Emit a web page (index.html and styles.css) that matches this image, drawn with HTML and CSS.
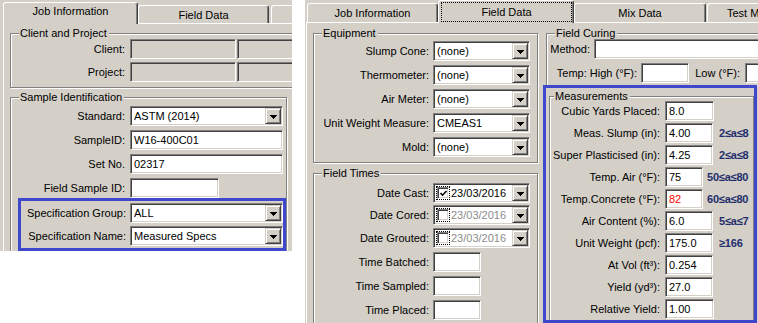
FILE: index.html
```html
<!DOCTYPE html>
<html>
<head>
<meta charset="utf-8">
<link rel="stylesheet" href="styles.css">
</head>
<body>
<div class="screen">
  <section class="win win-left">
    <div class="tabs tabs-left">
      <div class="tab tab-act tl-job">Job Information</div>
      <div class="tab tab-in tl-field">Field Data</div>
      <div class="tab tab-in tl-more"></div>
    </div>
    <div class="page page-left">
      <div class="group g-client">
        <div class="gtitle">Client and Project</div>
        <div class="row r-client">
          <span class="lbl lbl-l">Client:</span>
          <div class="fld dis w106"></div>
          <div class="fld dis wide sep"></div>
        </div>
        <div class="row r-project">
          <span class="lbl lbl-l">Project:</span>
          <div class="fld dis w106"></div>
          <div class="fld dis wide sep"></div>
        </div>
      </div>
      <div class="group g-sample">
        <div class="gtitle">Sample Identification</div>
        <div class="row r-std">
          <span class="lbl lbl-l">Standard:</span>
          <div class="fld combo w153"><span class="txt">ASTM (2014)</span><span class="dd"><svg width="7" height="4" viewBox="0 0 7 4" shape-rendering="crispEdges"><path d="M0 0h7v1h-1v1h-1v1h-1v1h-1v-1h-1v-1h-1v-1h-1z"/></svg></span></div>
        </div>
        <div class="row r-g4">
          <span class="lbl lbl-l">SampleID:</span>
          <div class="fld w153">W16-400C01</div>
        </div>
        <div class="row r-g4">
          <span class="lbl lbl-l">Set No.</span>
          <div class="fld w153">02317</div>
        </div>
        <div class="row r-g4">
          <span class="lbl lbl-l">Field Sample ID:</span>
          <div class="fld w89"></div>
        </div>
        <div class="hl hl-spec">
          <div class="row">
            <span class="lbl lbl-hl">Specification Group:</span>
            <div class="fld combo w153"><span class="txt">ALL</span><span class="dd"><svg width="7" height="4" viewBox="0 0 7 4" shape-rendering="crispEdges"><path d="M0 0h7v1h-1v1h-1v1h-1v1h-1v-1h-1v-1h-1v-1h-1z"/></svg></span></div>
          </div>
          <div class="row r-g3">
            <span class="lbl lbl-hl">Specification Name:</span>
            <div class="fld combo w153"><span class="txt">Measured Specs</span><span class="dd"><svg width="7" height="4" viewBox="0 0 7 4" shape-rendering="crispEdges"><path d="M0 0h7v1h-1v1h-1v1h-1v1h-1v-1h-1v-1h-1v-1h-1z"/></svg></span></div>
          </div>
        </div>
      </div>
    </div>
  </section>

  <section class="win win-right">
    <div class="tabs tabs-right">
      <div class="tab tab-in2 tr-job">Job Information</div>
      <div class="tab tab-act2 tr-field"><span class="focus">Field Data</span></div>
      <div class="tab tab-in2 tr-mix">Mix Data</div>
      <div class="tab tab-in2 tr-test">Test M</div>
    </div>
    <div class="page page-right">
      <div class="cols">
        <div class="col-l">
          <div class="group g-equip">
            <div class="gtitle">Equipment</div>
            <div class="row r-e1">
              <span class="lbl lbl-r">Slump Cone:</span>
              <div class="fld combo w97"><span class="txt">(none)</span><span class="dd"><svg width="7" height="4" viewBox="0 0 7 4" shape-rendering="crispEdges"><path d="M0 0h7v1h-1v1h-1v1h-1v1h-1v-1h-1v-1h-1v-1h-1z"/></svg></span></div>
            </div>
            <div class="row r-g4">
              <span class="lbl lbl-r">Thermometer:</span>
              <div class="fld combo w97"><span class="txt">(none)</span><span class="dd"><svg width="7" height="4" viewBox="0 0 7 4" shape-rendering="crispEdges"><path d="M0 0h7v1h-1v1h-1v1h-1v1h-1v-1h-1v-1h-1v-1h-1z"/></svg></span></div>
            </div>
            <div class="row r-g4">
              <span class="lbl lbl-r">Air Meter:</span>
              <div class="fld combo w97"><span class="txt">(none)</span><span class="dd"><svg width="7" height="4" viewBox="0 0 7 4" shape-rendering="crispEdges"><path d="M0 0h7v1h-1v1h-1v1h-1v1h-1v-1h-1v-1h-1v-1h-1z"/></svg></span></div>
            </div>
            <div class="row r-g4">
              <span class="lbl lbl-r">Unit Weight Measure:</span>
              <div class="fld combo w97"><span class="txt">CMEAS1</span><span class="dd"><svg width="7" height="4" viewBox="0 0 7 4" shape-rendering="crispEdges"><path d="M0 0h7v1h-1v1h-1v1h-1v1h-1v-1h-1v-1h-1v-1h-1z"/></svg></span></div>
            </div>
            <div class="row r-g4">
              <span class="lbl lbl-r">Mold:</span>
              <div class="fld combo w97"><span class="txt">(none)</span><span class="dd"><svg width="7" height="4" viewBox="0 0 7 4" shape-rendering="crispEdges"><path d="M0 0h7v1h-1v1h-1v1h-1v1h-1v-1h-1v-1h-1v-1h-1z"/></svg></span></div>
            </div>
          </div>
          <div class="group g-times">
            <div class="gtitle">Field Times</div>
            <div class="row r-t1">
              <span class="lbl lbl-r">Date Cast:</span>
              <div class="fld combo date w97"><span class="focus-cb"><span class="cb"><svg width="9" height="9" viewBox="0 0 9 9"><polyline points="1.5,4 3.5,6.2 7.5,2" fill="none" stroke="#000" stroke-width="1.6"/></svg></span></span><span class="txt">23/03/2016</span><span class="dd"><svg width="7" height="4" viewBox="0 0 7 4" shape-rendering="crispEdges"><path d="M0 0h7v1h-1v1h-1v1h-1v1h-1v-1h-1v-1h-1v-1h-1z"/></svg></span></div>
            </div>
            <div class="row r-g2">
              <span class="lbl lbl-r">Date Cored:</span>
              <div class="fld combo date w97"><span class="focus-cb"><span class="cb"></span></span><span class="txt off">23/03/2016</span><span class="dd"><svg width="7" height="4" viewBox="0 0 7 4" shape-rendering="crispEdges"><path d="M0 0h7v1h-1v1h-1v1h-1v1h-1v-1h-1v-1h-1v-1h-1z"/></svg></span></div>
            </div>
            <div class="row r-g3">
              <span class="lbl lbl-r">Date Grouted:</span>
              <div class="fld combo date w97"><span class="focus-cb"><span class="cb"></span></span><span class="txt off">23/03/2016</span><span class="dd"><svg width="7" height="4" viewBox="0 0 7 4" shape-rendering="crispEdges"><path d="M0 0h7v1h-1v1h-1v1h-1v1h-1v-1h-1v-1h-1v-1h-1z"/></svg></span></div>
            </div>
            <div class="row r-g4">
              <span class="lbl lbl-r">Time Batched:</span>
              <div class="fld w48"></div>
            </div>
            <div class="row r-g4">
              <span class="lbl lbl-r">Time Sampled:</span>
              <div class="fld w48"></div>
            </div>
            <div class="row r-g4">
              <span class="lbl lbl-r">Time Placed:</span>
              <div class="fld w48"></div>
            </div>
          </div>
        </div>

        <div class="col-r">
          <div class="group g-curing">
            <div class="gtitle">Field Curing</div>
            <div class="row r-m1">
              <span class="lbl lbl-method">Method:</span>
              <div class="fld wide"></div>
            </div>
            <div class="row r-g4">
              <span class="lbl lbl-temp">Temp: High (°F):</span>
              <div class="fld w48"></div>
              <span class="lbl lbl-low">Low (°F):</span>
              <div class="fld w48"></div>
            </div>
          </div>
          <div class="hl hl-meas">
            <div class="group g-meas">
              <div class="gtitle gt-meas">Measurements</div>
              <div class="row r-q1">
                <span class="lbl lbl-m">Cubic Yards Placed:</span>
                <div class="fld w49">8.0</div>
              </div>
              <div class="row r-g2">
                <span class="lbl lbl-m">Meas. Slump (in):</span>
                <div class="fld w48">4.00</div>
                <span class="spec">2≤a≤8</span>
              </div>
              <div class="row r-g2">
                <span class="lbl lbl-m">Super Plasticised (in):</span>
                <div class="fld w48">4.25</div>
                <span class="spec">2≤a≤8</span>
              </div>
              <div class="row r-g2">
                <span class="lbl lbl-m">Temp. Air (°F):</span>
                <div class="fld w38">75</div>
                <span class="spec sp-n">50≤a≤80</span>
              </div>
              <div class="row r-g2">
                <span class="lbl lbl-m">Temp.Concrete (°F):</span>
                <div class="fld w38 red">82</div>
                <span class="spec sp-n">60≤a≤80</span>
              </div>
              <div class="row r-g2">
                <span class="lbl lbl-m">Air Content (%):</span>
                <div class="fld w48">6.0</div>
                <span class="spec">5≤a≤7</span>
              </div>
              <div class="row r-g2">
                <span class="lbl lbl-m">Unit Weight (pcf):</span>
                <div class="fld w48">175.0</div>
                <span class="spec">≥166</span>
              </div>
              <div class="row r-g2">
                <span class="lbl lbl-m">At Vol (ft³):</span>
                <div class="fld w48">0.254</div>
              </div>
              <div class="row r-g2">
                <span class="lbl lbl-m">Yield (yd³):</span>
                <div class="fld w48">27.0</div>
              </div>
              <div class="row r-g2">
                <span class="lbl lbl-m">Relative Yield:</span>
                <div class="fld w49">1.00</div>
              </div>
            </div>
          </div>
        </div>
      </div>
    </div>
  </section>
</div>
</body>
</html>
```

FILE: styles.css
```css
* { box-sizing: border-box; }

body {
  margin: 0;
  background: #fff;
  font-family: "Liberation Sans", Arial, sans-serif;
  font-size: 11px;
  color: #000;
}

.screen {
  display: flex;
  align-items: flex-start;
  gap: 13px;
}

.win {
  flex: none;
  background: #d4d0c8;
  overflow: hidden;
}
.win-left { width: 292px; height: 251px; }
.win-right { width: 453px; height: 323px; }

/* ---------- tabs ---------- */
.tabs {
  display: flex;
  align-items: flex-end;
}
.tabs-left { height: 23px; padding-left: 3px; }
.tabs-right { height: 22px; padding-left: 2px; }

.tab {
  flex: none;
  background: #d4d0c8;
  border-top: 1px solid #fff;
  border-left: 1px solid #fff;
  border-right: 1px solid #404040;
  box-shadow: inset -1px 0 0 #808080;
  border-radius: 3px 3px 0 0;
  text-align: center;
  line-height: 13px;
  white-space: nowrap;
  overflow: hidden;
}
.tab-act {
  height: 22px;
  margin-bottom: -1px;
  padding-top: 2px;
  position: relative;
  z-index: 1;
}
.tab-in { height: 18px; padding-top: 3px; }
.tab-in2 { height: 19px; padding-top: 3px; }
.tab-act2 {
  height: 23px;
  margin-bottom: -1px;
  padding: 1px 1px 0 2px;
  position: relative;
  z-index: 1;
}
.tab-act2 .focus {
  display: block;
  height: 20px;
  border: 1px dotted #000;
  padding-top: 3px;
}

.tl-job { width: 135px; }
.tl-field { width: 131px; }
.tl-more { width: 132px; margin-left: 2px; }
.tr-job { width: 131px; }
.tr-field { width: 136px; }
.tr-mix { width: 132px; }
.tr-test { width: 132px; margin-left: 1px; text-align: left; padding-left: 19px; }

/* ---------- tab page ---------- */
.page {
  border-top: 1px solid #fff;
  border-left: 1px solid #fff;
  height: 400px;
}
.page-left { margin-left: 3px; }
.page-right { margin-left: 1px; }

/* ---------- group boxes ---------- */
.group {
  flex: none;
  border: 1px solid #808080;
  box-shadow: inset 1px 1px 0 #fff, 1px 1px 0 #fff;
}
.gtitle {
  width: max-content;
  height: 13px;
  line-height: 13px;
  margin: -7px 0 -6px 8px;
  padding: 0 2px 0 1px;
  background: #d4d0c8;
}

.g-client { margin: 9px 0 0 6px; width: 420px; height: 55px; }
.g-sample { margin: 9px 0 0 6px; width: 277px; height: 200px; }

.cols { display: flex; align-items: flex-start; }
.col-l { flex: none; width: 225px; margin-left: 6px; }
.col-r { flex: none; width: 300px; margin-left: 5px; }

.g-equip { margin-top: 10px; height: 130px; }
.g-times { margin-top: 10px; height: 200px; }
.g-curing {
  margin: 10px 0 0 3px;
  width: 280px;
  height: 52px;
  border-bottom: 0;
}

/* ---------- highlight frames ---------- */
.hl { border: 3px solid #3f47cc; }
.hl-spec {
  margin-left: 7px;
  width: 268px;
  padding: 2px 0 2px;
}
.hl-meas {
  width: 214px;
  height: 238px;
  overflow: hidden;
}
.g-meas {
  margin: 8px 0 0 3px;
  width: 205px;
  height: 240px;
}
.gt-meas { margin-left: 4px; }

/* ---------- rows ---------- */
.row {
  display: flex;
  align-items: center;
  height: 20px;
}
.r-client { margin-top: 5px; }
.r-project { margin-top: 3px; }
.r-std { margin-top: 8px; }
.r-g2 { margin-top: 2px; }
.r-g3 { margin-top: 3px; }
.r-g4 { margin-top: 4px; }
.r-e1 { margin-top: 7px; }
.r-t1 { margin-top: 9px; }
.r-m1 { margin-top: 5px; }
.r-q1 { margin-top: 4px; }

.lbl {
  flex: none;
  text-align: right;
  white-space: nowrap;
  margin-right: 4px;
}
.lbl-l { width: 114px; margin-right: 5px; }
.lbl-hl { width: 105px; margin-right: 4px; }
.lbl-r { width: 115px; }
.lbl-method { width: 43px; }
.lbl-temp { width: 90px; }
.lbl-low { width: 46px; margin-left: 5px; margin-right: 5px; }
.lbl-m { width: 110px; margin-right: 5px; }

/* ---------- fields ---------- */
.fld {
  flex: none;
  height: 20px;
  background: #fff;
  border: 1px solid;
  border-color: #808080 #fff #fff #808080;
  box-shadow: inset 1px 1px 0 #404040, inset -1px -1px 0 #d4d0c8;
  padding: 0 2px 0 3px;
  line-height: 18px;
  white-space: nowrap;
  overflow: hidden;
}
.fld.dis { background: #d4d0c8; }
.fld.red { color: #ff0000; }
.sep { margin-left: 1px; }

.w38 { width: 38px; }
.w48 { width: 48px; }
.w49 { width: 49px; }
.w89 { width: 89px; }
.w97 { width: 97px; }
.w106 { width: 106px; }
.w153 { width: 153px; }
.wide { width: 200px; }

.combo {
  display: flex;
  align-items: center;
  padding: 1px 1px 1px 3px;
}
.combo .txt {
  flex: 1;
  line-height: 16px;
  overflow: hidden;
}
.combo .txt.off { color: #8c8c8c; }
.dd {
  flex: none;
  display: flex;
  align-items: center;
  justify-content: center;
  width: 16px;
  height: 16px;
  background: #d4d0c8;
  border: 1px solid;
  border-color: #d4d0c8 #404040 #404040 #d4d0c8;
  box-shadow: inset 1px 1px 0 #fff, inset -1px -1px 0 #808080;
  padding-top: 1px;
}
.dd svg { display: block; fill: #000; }

.date { padding-left: 2px; }
.focus-cb {
  flex: none;
  display: flex;
  margin-right: 1px;
  border: 1px dotted #000;
  padding: 0;
}
.cb {
  display: flex;
  align-items: center;
  justify-content: center;
  width: 12px;
  height: 12px;
  background: #fff;
  border: 1px solid;
  border-color: #808080 #fff #fff #808080;
  box-shadow: inset 1px 1px 0 #404040, inset -1px -1px 0 #d4d0c8;
}
.cb svg { display: block; }

/* ---------- spec ranges ---------- */
.spec {
  flex: none;
  margin-left: 6px;
  font-weight: bold;
  font-size: 11px;
  color: #1f2d6b;
  white-space: nowrap;
  letter-spacing: -0.2px;
}
.sp-n { margin-left: 4px; }
```
